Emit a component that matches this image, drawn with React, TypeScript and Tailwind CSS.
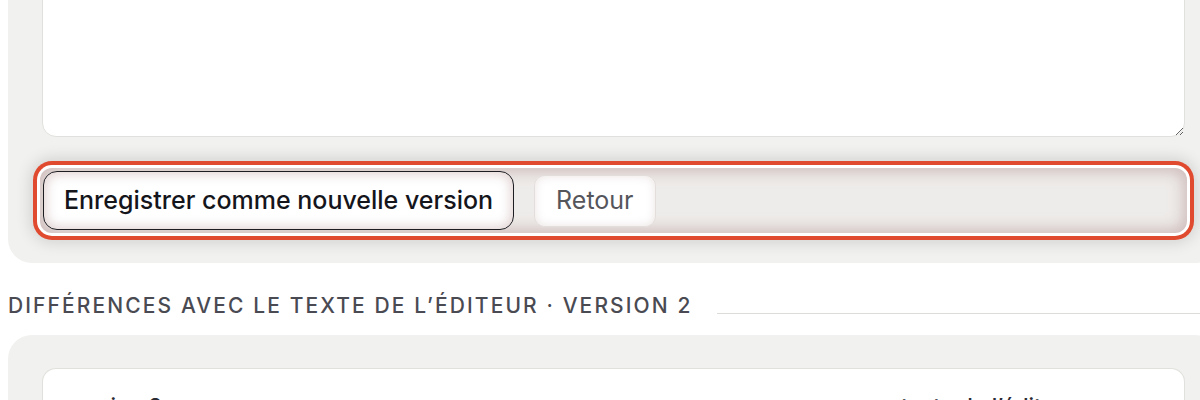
import { useState } from 'react';

/** Version editor footer: save bar (highlighted) and the start of the diff section. */
const App = () => {
  const [text, setText] = useState('');

  return (
    <div className="h-[400px] w-[1200px] overflow-hidden bg-white font-['Inter','Noto_Sans',sans-serif]">
      <div className="-mt-[60px] pl-2">
        {/* editor panel */}
        <div className="w-[1211px] rounded-[24px] bg-[#f1f1ef] px-[34px] pt-[34px] pb-[30px]">
          <textarea
            value={text}
            onChange={(e) => setText(e.target.value)}
            className="block h-[163px] w-full resize-y rounded-[14px] border border-[#e0e0dc] bg-white px-5 py-4 text-[20px] text-[#1b1b22] focus:outline-none"
          />

          <div className="mt-[31px] -mx-[2px] flex h-[65px] items-center gap-[20px] rounded-[12px] bg-[#eeecea] px-[3px] shadow-[0_0_0_3px_#fff,0_0_0_7px_#e04a2f,0_0_16px_9px_rgba(0,0,0,0.14),inset_0_0_16px_3px_rgba(150,100,100,0.38)]">
            <button className="h-[59px] rounded-[14px] border border-[#1d1d22] bg-white px-[20px] text-[25px] leading-none font-medium text-[#15151c] shadow-[inset_0_0_12px_2px_rgba(160,110,110,0.32)]">
              Enregistrer comme nouvelle version
            </button>
            <button className="h-[52px] rounded-[11px] border border-[#e3dedc] bg-white px-[21px] text-[25px] leading-none text-[#55555c] shadow-[inset_0_0_8px_1px_rgba(160,120,120,0.18)]">
              Retour
            </button>
          </div>
        </div>

        {/* diff section */}
        <div className="mt-[28px] flex items-center gap-6">
          <h2 className="whitespace-nowrap text-[21px] leading-[30px] font-medium uppercase tracking-[0.1em] text-[#4a4a52]">
            Différences avec le texte de l’éditeur · version 2
          </h2>
          <div className="mt-[14px] h-px flex-1 bg-[#dcdcd8]" />
        </div>

        <div className="mt-[14px] w-[1211px] rounded-[24px] bg-[#f1f1ef] px-[34px] pt-[33px]">
          <div className="rounded-t-[14px] border border-b-0 border-[#e0e0dc] bg-white px-[22px] pt-[22px] pb-6">
            <div className="flex text-[22px] leading-[30px] font-medium text-[#2a2a32]">
              <span>version 2</span>
              <span className="ml-auto mr-[86px]">texte de l’éditeur</span>
            </div>
          </div>
        </div>
      </div>
    </div>
  );
};

export default App;
